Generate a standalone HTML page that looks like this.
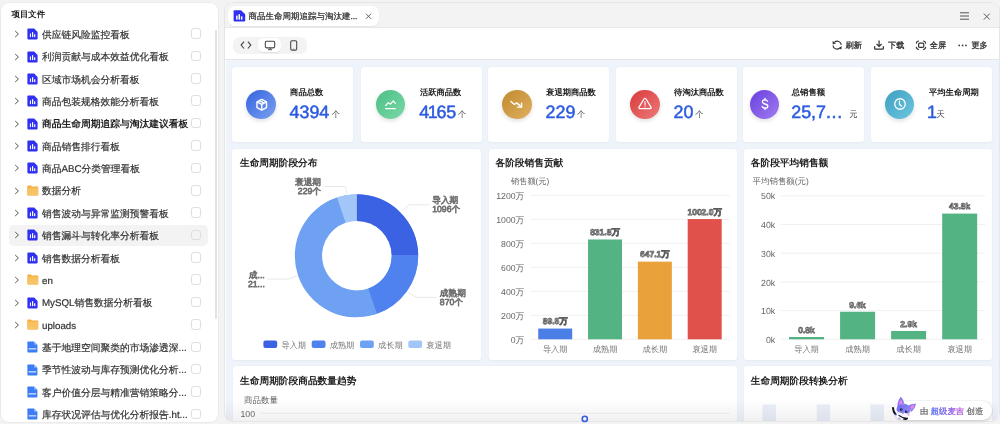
<!DOCTYPE html><html><head><meta charset="utf-8"><style>
*{box-sizing:border-box;margin:0;padding:0}
html,body{text-rendering:geometricPrecision;width:1000px;height:424px;overflow:hidden;background:#f3f3f3;font-family:"Liberation Sans",sans-serif;color:#333}
.abs{position:absolute}
#side{position:absolute;left:1px;top:2.5px;width:217.1px;height:419px;background:#fff;border-radius:8px;box-shadow:0 0 0 0.6px #e4e4e4}
#side .hd{position:absolute;left:10.5px;top:5px;font-size:8.4px;font-weight:bold;color:#222;line-height:12px}
.row{position:absolute;left:0;width:214px;height:22px}
.row .hov{position:absolute;left:8.5px;top:1px;width:199px;height:20.5px;background:#f3f3f3;border-radius:5px}
.row .chev{position:absolute;left:14px;top:7px}
.row .ic{position:absolute;left:26.6px;top:5px}
.row .t{position:absolute;left:42px;top:1.7px;line-height:22px;font-size:9.75px;color:#333;-webkit-text-stroke:0.2px #333;white-space:nowrap}
.row.b .t{font-weight:bold;color:#222;-webkit-text-stroke:0}
.row .cb{position:absolute;left:190.7px;top:5.2px;width:10.6px;height:10.6px;border:0.8px solid #dedede;border-radius:2.8px;background:transparent}
#sb{position:absolute;left:214.7px;top:30px;width:2.6px;height:289px;background:#e2e2e2;border-radius:2px}
#main{position:absolute;left:224.6px;top:2.5px;width:774.2px;height:418.3px;background:#fff;border-radius:8px;box-shadow:0 0 0 0.8px #e2e2e2;overflow:hidden}
#tabbar{position:absolute;left:0;top:0;width:100%;height:25.5px;background:#f3f3f3;border-bottom:0.8px solid #e8e8e8}
#tab{position:absolute;left:3.8px;top:3.6px;width:151px;height:20.3px;background:#fff;border-radius:7px;box-shadow:0 0.5px 1px rgba(0,0,0,0.06)}
#tab .t{position:absolute;left:20px;top:0;line-height:20px;font-size:8.5px;color:#333;-webkit-text-stroke:0.25px #333;white-space:nowrap}
#tbar{position:absolute;left:0;top:25.5px;width:100%;height:31.6px;background:#fff;border-bottom:0.8px solid #e6e6e6}
#seg{position:absolute;left:8.4px;top:9.3px;width:73.8px;height:17.1px;background:#f3f3f3;border-radius:7px}
#seg .on{position:absolute;left:24.6px;top:1.2px;width:23.7px;height:14px;background:#fff;border-radius:5px;box-shadow:0 0.5px 1px rgba(0,0,0,0.08)}
.tb{position:absolute;top:9.5px;height:17px;line-height:17px;font-size:8.2px;color:#333;-webkit-text-stroke:0.3px #333;white-space:nowrap}
#dash{position:absolute;left:1px;top:57.1px;width:773.2px;height:400px;background:#eff3fa}
.card{position:absolute;background:#fff;border-radius:3px;box-shadow:0 0.5px 2px rgba(30,50,120,0.05)}
.kt{position:absolute;font-size:8.3px;font-weight:bold;color:#222;white-space:nowrap;line-height:10px}
.kv{position:absolute;font-size:17.9px;font-weight:normal;-webkit-text-stroke:0.5px #2b5be0;color:#2b5be0;white-space:nowrap;line-height:20px}
.ku{position:absolute;font-size:8.3px;color:#444;white-space:nowrap;line-height:10px}
.circ{position:absolute;width:29.5px;height:29.5px;border-radius:50%;box-shadow:0 2px 4px rgba(0,0,0,0.12)}
.ct{position:absolute;font-size:9.7px;font-weight:bold;color:#222;white-space:nowrap;line-height:12px}
svg text{font-family:"Liberation Sans",sans-serif}
</style></head><body style="will-change:transform">
<div id="side"><div class="hd">项目文件</div></div>
<div class="abs" style="left:0;top:0;width:219px;height:424px"><div class="row" style="top:23.15px"><svg class="chev" width="6" height="8" viewBox="0 0 6 8"><path d="M1.2 1 L4.4 4 L1.2 7" fill="none" stroke="#555" stroke-width="1"/></svg><svg class="ic" width="11" height="12" viewBox="0 0 11 12"><path d="M1.2 0.6 H7.2 L10.6 4 V10.6 Q10.6 11.4 9.8 11.4 H1.2 Q0.4 11.4 0.4 10.6 V1.4 Q0.4 0.6 1.2 0.6Z" fill="#3030f2"/><rect x="2.9" y="5.5" width="1.1" height="3.6" fill="#fff"/><rect x="5" y="4.2" width="1.2" height="4.9" fill="#fff"/><rect x="7.1" y="6.3" width="1.2" height="2.8" fill="#fff"/></svg><span class="t">供应链风险监控看板</span><i class="cb"></i></div>
<div class="row" style="top:45.52px"><svg class="chev" width="6" height="8" viewBox="0 0 6 8"><path d="M1.2 1 L4.4 4 L1.2 7" fill="none" stroke="#555" stroke-width="1"/></svg><svg class="ic" width="11" height="12" viewBox="0 0 11 12"><path d="M1.2 0.6 H7.2 L10.6 4 V10.6 Q10.6 11.4 9.8 11.4 H1.2 Q0.4 11.4 0.4 10.6 V1.4 Q0.4 0.6 1.2 0.6Z" fill="#3030f2"/><rect x="2.9" y="5.5" width="1.1" height="3.6" fill="#fff"/><rect x="5" y="4.2" width="1.2" height="4.9" fill="#fff"/><rect x="7.1" y="6.3" width="1.2" height="2.8" fill="#fff"/></svg><span class="t">利润贡献与成本效益优化看板</span><i class="cb"></i></div>
<div class="row" style="top:67.89px"><svg class="chev" width="6" height="8" viewBox="0 0 6 8"><path d="M1.2 1 L4.4 4 L1.2 7" fill="none" stroke="#555" stroke-width="1"/></svg><svg class="ic" width="11" height="12" viewBox="0 0 11 12"><path d="M1.2 0.6 H7.2 L10.6 4 V10.6 Q10.6 11.4 9.8 11.4 H1.2 Q0.4 11.4 0.4 10.6 V1.4 Q0.4 0.6 1.2 0.6Z" fill="#3030f2"/><rect x="2.9" y="5.5" width="1.1" height="3.6" fill="#fff"/><rect x="5" y="4.2" width="1.2" height="4.9" fill="#fff"/><rect x="7.1" y="6.3" width="1.2" height="2.8" fill="#fff"/></svg><span class="t">区域市场机会分析看板</span><i class="cb"></i></div>
<div class="row" style="top:90.26px"><svg class="chev" width="6" height="8" viewBox="0 0 6 8"><path d="M1.2 1 L4.4 4 L1.2 7" fill="none" stroke="#555" stroke-width="1"/></svg><svg class="ic" width="11" height="12" viewBox="0 0 11 12"><path d="M1.2 0.6 H7.2 L10.6 4 V10.6 Q10.6 11.4 9.8 11.4 H1.2 Q0.4 11.4 0.4 10.6 V1.4 Q0.4 0.6 1.2 0.6Z" fill="#3030f2"/><rect x="2.9" y="5.5" width="1.1" height="3.6" fill="#fff"/><rect x="5" y="4.2" width="1.2" height="4.9" fill="#fff"/><rect x="7.1" y="6.3" width="1.2" height="2.8" fill="#fff"/></svg><span class="t">商品包装规格效能分析看板</span><i class="cb"></i></div>
<div class="row b" style="top:112.63px"><svg class="chev" width="6" height="8" viewBox="0 0 6 8"><path d="M1.2 1 L4.4 4 L1.2 7" fill="none" stroke="#555" stroke-width="1"/></svg><svg class="ic" width="11" height="12" viewBox="0 0 11 12"><path d="M1.2 0.6 H7.2 L10.6 4 V10.6 Q10.6 11.4 9.8 11.4 H1.2 Q0.4 11.4 0.4 10.6 V1.4 Q0.4 0.6 1.2 0.6Z" fill="#3030f2"/><rect x="2.9" y="5.5" width="1.1" height="3.6" fill="#fff"/><rect x="5" y="4.2" width="1.2" height="4.9" fill="#fff"/><rect x="7.1" y="6.3" width="1.2" height="2.8" fill="#fff"/></svg><span class="t">商品生命周期追踪与淘汰建议看板</span><i class="cb"></i></div>
<div class="row" style="top:135.00px"><svg class="chev" width="6" height="8" viewBox="0 0 6 8"><path d="M1.2 1 L4.4 4 L1.2 7" fill="none" stroke="#555" stroke-width="1"/></svg><svg class="ic" width="11" height="12" viewBox="0 0 11 12"><path d="M1.2 0.6 H7.2 L10.6 4 V10.6 Q10.6 11.4 9.8 11.4 H1.2 Q0.4 11.4 0.4 10.6 V1.4 Q0.4 0.6 1.2 0.6Z" fill="#3030f2"/><rect x="2.9" y="5.5" width="1.1" height="3.6" fill="#fff"/><rect x="5" y="4.2" width="1.2" height="4.9" fill="#fff"/><rect x="7.1" y="6.3" width="1.2" height="2.8" fill="#fff"/></svg><span class="t">商品销售排行看板</span><i class="cb"></i></div>
<div class="row" style="top:157.37px"><svg class="chev" width="6" height="8" viewBox="0 0 6 8"><path d="M1.2 1 L4.4 4 L1.2 7" fill="none" stroke="#555" stroke-width="1"/></svg><svg class="ic" width="11" height="12" viewBox="0 0 11 12"><path d="M1.2 0.6 H7.2 L10.6 4 V10.6 Q10.6 11.4 9.8 11.4 H1.2 Q0.4 11.4 0.4 10.6 V1.4 Q0.4 0.6 1.2 0.6Z" fill="#3030f2"/><rect x="2.9" y="5.5" width="1.1" height="3.6" fill="#fff"/><rect x="5" y="4.2" width="1.2" height="4.9" fill="#fff"/><rect x="7.1" y="6.3" width="1.2" height="2.8" fill="#fff"/></svg><span class="t">商品ABC分类管理看板</span><i class="cb"></i></div>
<div class="row" style="top:179.74px"><svg class="chev" width="6" height="8" viewBox="0 0 6 8"><path d="M1.2 1 L4.4 4 L1.2 7" fill="none" stroke="#555" stroke-width="1"/></svg><svg class="ic" width="12" height="12" viewBox="0 0 12 12"><defs><linearGradient id="fd" x1="0" y1="0" x2="0" y2="1"><stop offset="0" stop-color="#f6bf5c"/><stop offset="1" stop-color="#f8c66c"/></linearGradient></defs><path d="M0.4 1.2 Q0.4 0.4 1.2 0.4 H3.4 Q3.9 0.4 4.2 0.8 L4.9 1.6 H10.4 Q11.2 1.6 11.2 2.4 V9.8 Q11.2 10.6 10.4 10.6 H1.2 Q0.4 10.6 0.4 9.8Z" fill="#f3ab3a"/><path d="M0.4 2.6 H11.2 V9.8 Q11.2 10.6 10.4 10.6 H1.2 Q0.4 10.6 0.4 9.8Z" fill="url(#fd)"/></svg><span class="t">数据分析</span><i class="cb"></i></div>
<div class="row" style="top:202.11px"><svg class="chev" width="6" height="8" viewBox="0 0 6 8"><path d="M1.2 1 L4.4 4 L1.2 7" fill="none" stroke="#555" stroke-width="1"/></svg><svg class="ic" width="11" height="12" viewBox="0 0 11 12"><path d="M1.2 0.6 H7.2 L10.6 4 V10.6 Q10.6 11.4 9.8 11.4 H1.2 Q0.4 11.4 0.4 10.6 V1.4 Q0.4 0.6 1.2 0.6Z" fill="#3030f2"/><rect x="2.9" y="5.5" width="1.1" height="3.6" fill="#fff"/><rect x="5" y="4.2" width="1.2" height="4.9" fill="#fff"/><rect x="7.1" y="6.3" width="1.2" height="2.8" fill="#fff"/></svg><span class="t">销售波动与异常监测预警看板</span><i class="cb"></i></div>
<div class="row h" style="top:224.48px"><i class="hov"></i><svg class="chev" width="6" height="8" viewBox="0 0 6 8"><path d="M1.2 1 L4.4 4 L1.2 7" fill="none" stroke="#555" stroke-width="1"/></svg><svg class="ic" width="11" height="12" viewBox="0 0 11 12"><path d="M1.2 0.6 H7.2 L10.6 4 V10.6 Q10.6 11.4 9.8 11.4 H1.2 Q0.4 11.4 0.4 10.6 V1.4 Q0.4 0.6 1.2 0.6Z" fill="#3030f2"/><rect x="2.9" y="5.5" width="1.1" height="3.6" fill="#fff"/><rect x="5" y="4.2" width="1.2" height="4.9" fill="#fff"/><rect x="7.1" y="6.3" width="1.2" height="2.8" fill="#fff"/></svg><span class="t">销售漏斗与转化率分析看板</span><i class="cb"></i></div>
<div class="row" style="top:246.85px"><svg class="chev" width="6" height="8" viewBox="0 0 6 8"><path d="M1.2 1 L4.4 4 L1.2 7" fill="none" stroke="#555" stroke-width="1"/></svg><svg class="ic" width="11" height="12" viewBox="0 0 11 12"><path d="M1.2 0.6 H7.2 L10.6 4 V10.6 Q10.6 11.4 9.8 11.4 H1.2 Q0.4 11.4 0.4 10.6 V1.4 Q0.4 0.6 1.2 0.6Z" fill="#3030f2"/><rect x="2.9" y="5.5" width="1.1" height="3.6" fill="#fff"/><rect x="5" y="4.2" width="1.2" height="4.9" fill="#fff"/><rect x="7.1" y="6.3" width="1.2" height="2.8" fill="#fff"/></svg><span class="t">销售数据分析看板</span><i class="cb"></i></div>
<div class="row" style="top:269.22px"><svg class="chev" width="6" height="8" viewBox="0 0 6 8"><path d="M1.2 1 L4.4 4 L1.2 7" fill="none" stroke="#555" stroke-width="1"/></svg><svg class="ic" width="12" height="12" viewBox="0 0 12 12"><defs><linearGradient id="fd" x1="0" y1="0" x2="0" y2="1"><stop offset="0" stop-color="#f6bf5c"/><stop offset="1" stop-color="#f8c66c"/></linearGradient></defs><path d="M0.4 1.2 Q0.4 0.4 1.2 0.4 H3.4 Q3.9 0.4 4.2 0.8 L4.9 1.6 H10.4 Q11.2 1.6 11.2 2.4 V9.8 Q11.2 10.6 10.4 10.6 H1.2 Q0.4 10.6 0.4 9.8Z" fill="#f3ab3a"/><path d="M0.4 2.6 H11.2 V9.8 Q11.2 10.6 10.4 10.6 H1.2 Q0.4 10.6 0.4 9.8Z" fill="url(#fd)"/></svg><span class="t">en</span><i class="cb"></i></div>
<div class="row" style="top:291.59px"><svg class="chev" width="6" height="8" viewBox="0 0 6 8"><path d="M1.2 1 L4.4 4 L1.2 7" fill="none" stroke="#555" stroke-width="1"/></svg><svg class="ic" width="11" height="12" viewBox="0 0 11 12"><path d="M1.2 0.6 H7.2 L10.6 4 V10.6 Q10.6 11.4 9.8 11.4 H1.2 Q0.4 11.4 0.4 10.6 V1.4 Q0.4 0.6 1.2 0.6Z" fill="#3030f2"/><rect x="2.9" y="5.5" width="1.1" height="3.6" fill="#fff"/><rect x="5" y="4.2" width="1.2" height="4.9" fill="#fff"/><rect x="7.1" y="6.3" width="1.2" height="2.8" fill="#fff"/></svg><span class="t">MySQL销售数据分析看板</span><i class="cb"></i></div>
<div class="row" style="top:313.96px"><svg class="chev" width="6" height="8" viewBox="0 0 6 8"><path d="M1.2 1 L4.4 4 L1.2 7" fill="none" stroke="#555" stroke-width="1"/></svg><svg class="ic" width="12" height="12" viewBox="0 0 12 12"><defs><linearGradient id="fd" x1="0" y1="0" x2="0" y2="1"><stop offset="0" stop-color="#f6bf5c"/><stop offset="1" stop-color="#f8c66c"/></linearGradient></defs><path d="M0.4 1.2 Q0.4 0.4 1.2 0.4 H3.4 Q3.9 0.4 4.2 0.8 L4.9 1.6 H10.4 Q11.2 1.6 11.2 2.4 V9.8 Q11.2 10.6 10.4 10.6 H1.2 Q0.4 10.6 0.4 9.8Z" fill="#f3ab3a"/><path d="M0.4 2.6 H11.2 V9.8 Q11.2 10.6 10.4 10.6 H1.2 Q0.4 10.6 0.4 9.8Z" fill="url(#fd)"/></svg><span class="t">uploads</span><i class="cb"></i></div>
<div class="row" style="top:336.33px"><svg class="ic" width="11" height="12" viewBox="0 0 11 12"><path d="M1.2 0.4 H7 L10.4 3.8 V10.8 Q10.4 11.6 9.6 11.6 H1.2 Q0.4 11.6 0.4 10.8 V1.2 Q0.4 0.4 1.2 0.4Z" fill="#3c7cf4"/><path d="M7 0.4 L10.4 3.8 H7.8 Q7 3.8 7 3Z" fill="#8fb4fa"/><rect x="1.6" y="7.2" width="7.6" height="1.3" fill="#cfe0ff"/></svg><span class="t">基于地理空间聚类的市场渗透深...</span><i class="cb"></i></div>
<div class="row" style="top:358.70px"><svg class="ic" width="11" height="12" viewBox="0 0 11 12"><path d="M1.2 0.4 H7 L10.4 3.8 V10.8 Q10.4 11.6 9.6 11.6 H1.2 Q0.4 11.6 0.4 10.8 V1.2 Q0.4 0.4 1.2 0.4Z" fill="#3c7cf4"/><path d="M7 0.4 L10.4 3.8 H7.8 Q7 3.8 7 3Z" fill="#8fb4fa"/><rect x="1.6" y="7.2" width="7.6" height="1.3" fill="#cfe0ff"/></svg><span class="t">季节性波动与库存预测优化分析...</span><i class="cb"></i></div>
<div class="row" style="top:381.07px"><svg class="ic" width="11" height="12" viewBox="0 0 11 12"><path d="M1.2 0.4 H7 L10.4 3.8 V10.8 Q10.4 11.6 9.6 11.6 H1.2 Q0.4 11.6 0.4 10.8 V1.2 Q0.4 0.4 1.2 0.4Z" fill="#3c7cf4"/><path d="M7 0.4 L10.4 3.8 H7.8 Q7 3.8 7 3Z" fill="#8fb4fa"/><rect x="1.6" y="7.2" width="7.6" height="1.3" fill="#cfe0ff"/></svg><span class="t">客户价值分层与精准营销策略分...</span><i class="cb"></i></div>
<div class="row" style="top:403.44px"><svg class="ic" width="11" height="12" viewBox="0 0 11 12"><path d="M1.2 0.4 H7 L10.4 3.8 V10.8 Q10.4 11.6 9.6 11.6 H1.2 Q0.4 11.6 0.4 10.8 V1.2 Q0.4 0.4 1.2 0.4Z" fill="#3c7cf4"/><path d="M7 0.4 L10.4 3.8 H7.8 Q7 3.8 7 3Z" fill="#8fb4fa"/><rect x="1.6" y="7.2" width="7.6" height="1.3" fill="#cfe0ff"/></svg><span class="t">库存状况评估与优化分析报告.ht...</span><i class="cb"></i></div></div>
<div id="sb"></div>
<div id="main">
 <div id="tabbar"><div id="tab"><span class="t">商品生命周期追踪与淘汰建...</span></div></div>
 <div id="tbar"><div id="seg"><div class="on"></div></div>
 </div>
 <div id="dash"><div class="card" style="left:6.90px;top:7.20px;width:120.8px;height:75px"></div><div class="circ" style="left:20.50px;top:30.10px;background:linear-gradient(135deg,#3563e0,#7ba0f0)"><div style="position:absolute;left:0;top:0;width:29.5px;height:29.5px;display:flex;align-items:center;justify-content:center"><svg width="13.5" height="13.5" viewBox="0 0 24 24" style="margin-left:1.6px" fill="none" stroke="#fff" stroke-width="2.5" stroke-linejoin="round"><path d="M12 2.5 L20.5 7 V17 L12 21.5 L3.5 17 V7 Z"/><path d="M3.5 7 L12 11.5 L20.5 7 M12 11.5 V21.5 M7.8 4.8 L16.2 9.2"/></svg></div></div><div class="kt" style="left:64.50px;top:27.40px">商品总数</div><div class="kv" style="left:63.90px;top:42.20px">4394</div><div class="ku" style="left:106.20px;top:49.40px">个</div><div class="card" style="left:135.15px;top:7.20px;width:120.8px;height:75px"></div><div class="circ" style="left:150.30px;top:30.10px;background:linear-gradient(135deg,#4cbf86,#7ad9a6)"><div style="position:absolute;left:0;top:0;width:29.5px;height:29.5px;display:flex;align-items:center;justify-content:center"><svg width="13" height="13" viewBox="0 0 24 24" fill="none" stroke="#fff" stroke-width="2.2" stroke-linecap="round" stroke-linejoin="round"><path d="M3 14 L8 8.5 L12 11.5 L17 5.5 L21 10"/><path d="M3 19.5 H21"/></svg></div></div><div class="kt" style="left:194.30px;top:27.40px">活跃商品数</div><div class="kv" style="left:193.70px;top:42.20px">4<span style="margin:0 -1.4px">1</span>65</div><div class="ku" style="left:232.40px;top:49.40px">个</div><div class="card" style="left:262.50px;top:7.20px;width:120.8px;height:75px"></div><div class="circ" style="left:276.50px;top:30.10px;background:linear-gradient(135deg,#c08a2e,#e0b060)"><div style="position:absolute;left:0;top:0;width:29.5px;height:29.5px;display:flex;align-items:center;justify-content:center"><svg width="13" height="13" viewBox="0 0 24 24" fill="none" stroke="#fff" stroke-width="2.6" stroke-linecap="round" stroke-linejoin="round"><path d="M1.8 6.4 L8.2 12.1 L12.4 9 L21.3 16.8"/><path d="M21.4 9.5 V16.9 H13.8"/></svg></div></div><div class="kt" style="left:320.50px;top:27.40px">衰退期商品数</div><div class="kv" style="left:319.90px;top:42.20px">229</div><div class="ku" style="left:351.40px;top:49.40px">个</div><div class="card" style="left:390.30px;top:7.20px;width:120.8px;height:75px"></div><div class="circ" style="left:404.50px;top:30.10px;background:linear-gradient(135deg,#d83a3a,#ee7a7a)"><div style="position:absolute;left:0;top:0;width:29.5px;height:29.5px;display:flex;align-items:center;justify-content:center"><svg width="14" height="14" viewBox="0 0 24 24" fill="none" stroke="#fff" stroke-width="2.1" stroke-linejoin="round"><path d="M10.2 3.4 Q12 0.9 13.8 3.4 L22.2 17.4 Q23.4 19.8 20.6 19.8 H3.4 Q0.6 19.8 1.8 17.4Z"/><path d="M12 7.8 V13.6 M12 16.4 V16.9" stroke-linecap="round" stroke-width="1.9"/></svg></div></div><div class="kt" style="left:448.50px;top:27.40px">待淘汰商品数</div><div class="kv" style="left:447.90px;top:42.20px">20</div><div class="ku" style="left:469.60px;top:49.40px">个</div><div class="card" style="left:517.90px;top:7.20px;width:120.8px;height:75px"></div><div class="circ" style="left:524.40px;top:30.10px;background:linear-gradient(135deg,#6a3fe0,#a07cf0)"><div style="position:absolute;left:0;top:0;width:29.5px;height:29.5px;display:flex;align-items:center;justify-content:center"><svg width="14" height="14" viewBox="0 0 24 24" fill="none" stroke="#fff" stroke-width="2.3" stroke-linecap="round"><path d="M16.5 7.5 Q15.5 5 12 5 Q7.5 5 7.5 8.3 Q7.5 11 12 12 Q16.8 13 16.8 15.8 Q16.8 19 12 19 Q8.2 19 7.2 16.3"/><path d="M12 2.5 V5 M12 19 V21.5"/></svg></div></div><div class="kt" style="left:566.20px;top:27.40px">总销售额</div><div class="kv" style="left:565.60px;top:42.20px">25,7<span style="letter-spacing:0.6px">...</span></div><div class="ku" style="left:623.70px;top:49.40px">元</div><div class="card" style="left:645.90px;top:7.20px;width:120.8px;height:75px"></div><div class="circ" style="left:659.40px;top:30.10px;background:linear-gradient(135deg,#3f9fc0,#6cc6e0)"><div style="position:absolute;left:0;top:0;width:29.5px;height:29.5px;display:flex;align-items:center;justify-content:center"><svg width="14" height="14" viewBox="0 0 24 24" fill="none" stroke="#fff" stroke-width="2.2" stroke-linecap="round"><circle cx="12" cy="12" r="9"/><path d="M11 7 V12.5 L14.5 15.5"/></svg></div></div><div class="kt" style="left:703.40px;top:27.40px">平均生命周期</div><div class="kv" style="left:701.50px;top:42.20px">1</div><div class="ku" style="left:711.00px;top:49.40px">天</div><div class="card" style="left:6.90px;top:89.70px;width:248.7px;height:210.8px"></div><div class="card" style="left:263.30px;top:89.70px;width:248.2px;height:210.8px"></div><div class="card" style="left:518.10px;top:89.70px;width:248.3px;height:210.8px"></div><div class="card" style="left:7.00px;top:306.40px;width:504.5px;height:80px"></div><div class="card" style="left:518.10px;top:306.40px;width:248.3px;height:80px"></div><div class="ct" style="left:14.40px;top:98.10px">生命周期阶段分布</div><div class="ct" style="left:269.90px;top:98.10px">各阶段销售贡献</div><div class="ct" style="left:525.20px;top:98.10px">各阶段平均销售额</div><div class="ct" style="left:14.50px;top:316.70px">生命周期阶段商品数量趋势</div><div class="ct" style="left:525.20px;top:316.70px">生命周期阶段转换分析</div></div>
</div>
<div class="tb abs" style="left:845.5px;top:36.8px">刷新</div>
<div class="tb abs" style="left:888px;top:36.8px">下载</div>
<div class="tb abs" style="left:929.8px;top:36.8px">全屏</div>
<div class="tb abs" style="left:971.4px;top:36.8px">更多</div>
<svg class="abs" style="left:0;top:0" width="1000" height="60" viewBox="0 0 1000 60">
<path d="M234.6 10.2 H241 L245.2 14.2 V20.6 Q245.2 21.6 244.2 21.6 H234.6 Q233.6 21.6 233.6 20.6 V11.2 Q233.6 10.2 234.6 10.2Z" fill="#3030f2"/>
<rect x="236.1" y="15.6" width="1.5" height="4" fill="#fff"/><rect x="238.5" y="14.2" width="1.5" height="5.4" fill="#fff"/><rect x="240.9" y="16.4" width="1.5" height="3.2" fill="#fff"/>
<path d="M366 13.8 L371 18.8 M371 13.8 L366 18.8" stroke="#555" stroke-width="0.9"/>
<path d="M960 12.8 H969 M960 16 H969 M960 19.2 H969" stroke="#555" stroke-width="1"/>
<path d="M983.8 13.6 L989.8 19.6 M989.8 13.6 L983.8 19.6" stroke="#555" stroke-width="0.95"/>
<path d="M244 41.6 L241.1 45.1 L244 48.5 M247.9 41.6 L250.8 45.1 L247.9 48.5" fill="none" stroke="#444" stroke-width="1.1"/>
<rect x="265.3" y="41.3" width="9.4" height="6.6" rx="1.3" fill="none" stroke="#444" stroke-width="1.05"/><path d="M270 47.9 V49.5 M268 49.7 H272" stroke="#444" stroke-width="0.9"/>
<rect x="290.7" y="40.7" width="6" height="9.4" rx="1.4" fill="none" stroke="#444" stroke-width="1.05"/><path d="M293.2 48.6 H294.2" stroke="#999" stroke-width="0.7"/>
<path d="M841.3 44.8 A4.2 4.2 0 0 0 834.6 42" fill="none" stroke="#333" stroke-width="1.15"/><path d="M832.6 41 L836 43.3 L832.8 44.6Z" fill="#333"/>
<path d="M832.9 45.5 A4.2 4.2 0 0 0 839.6 48.3" fill="none" stroke="#333" stroke-width="1.15"/><path d="M841.6 46 L841.5 49.6 L838.4 48.2Z" fill="#333"/>
<path d="M879.1 40.6 V45.6 M876.6 44 L879.1 46.4 L881.6 44" fill="none" stroke="#333" stroke-width="1.2"/><path d="M874.6 46.3 V48.2 Q874.6 49.2 875.6 49.2 H882.4 Q883.4 49.2 883.4 48.2 V46.3" fill="none" stroke="#333" stroke-width="1.3"/>
<path d="M916.4 43.1 Q916.6 41.2 918.5 41 M923.5 41 Q925.4 41.2 925.6 43.1 M925.6 47.4 Q925.4 49.3 923.5 49.5 M918.5 49.5 Q916.6 49.3 916.4 47.4" fill="none" stroke="#333" stroke-width="1.2" stroke-linecap="round"/><rect x="918.6" y="43.2" width="5.2" height="4.2" rx="1.2" fill="none" stroke="#333" stroke-width="1.2"/>
<circle cx="959.2" cy="45.4" r="0.85" fill="#333"/><circle cx="962.6" cy="45.4" r="0.85" fill="#333"/><circle cx="966" cy="45.4" r="0.85" fill="#333"/>
</svg>
<svg class="abs" style="left:0;top:0" width="1000" height="424" viewBox="0 0 1000 424"><circle cx="356.8" cy="255.7" r="48.15" fill="none" stroke="#6fa1f3" stroke-width="26.1"/><path d="M356.80 194.20 A61.5 61.5 0 0 1 418.30 255.47 L391.60 255.57 A34.8 34.8 0 0 0 356.80 220.90Z" fill="#3a62e3"/><path d="M418.30 255.47 A61.5 61.5 0 0 1 376.76 313.87 L368.09 288.62 A34.8 34.8 0 0 0 391.60 255.57Z" fill="#4f82ef"/><path d="M376.76 313.87 A61.5 61.5 0 1 1 337.03 197.47 L345.61 222.75 A34.8 34.8 0 1 0 368.09 288.62Z" fill="#6fa1f3"/><path d="M337.03 197.47 A61.5 61.5 0 0 1 356.80 194.20 L356.80 220.90 A34.8 34.8 0 0 0 345.61 222.75Z" fill="#a3c6f8"/><path d="M401.5 211.2 L409.3 204.8 L429 204.8" fill="none" stroke="#e2e2e2" stroke-width="0.8"/><path d="M407.7 292.2 L416 297.4 L436.5 297.4" fill="none" stroke="#e2e2e2" stroke-width="0.8"/><path d="M347 193.6 L345.1 186.5 L324.3 186.5" fill="none" stroke="#e2e2e2" stroke-width="0.8"/><path d="M297.3 275.8 L288.8 279 L267.5 279" fill="none" stroke="#e2e2e2" stroke-width="0.8"/><text x="432.2" y="203.4" font-size="8.7" text-anchor="start" fill="#fff" stroke="#fff" stroke-width="2.2" stroke-linejoin="round" font-weight="normal">导入期</text><text x="432.2" y="203.4" font-size="8.7" text-anchor="start" fill="#e8e8e8" stroke="#707070" stroke-width="0.75" stroke-linejoin="round" font-weight="normal">导入期</text><text x="432.2" y="212" font-size="8.7" text-anchor="start" fill="#fff" stroke="#fff" stroke-width="2.2" stroke-linejoin="round" font-weight="normal">1096个</text><text x="432.2" y="212" font-size="8.7" text-anchor="start" fill="#e8e8e8" stroke="#707070" stroke-width="0.75" stroke-linejoin="round" font-weight="normal">1096个</text><text x="439.8" y="296.3" font-size="8.7" text-anchor="start" fill="#fff" stroke="#fff" stroke-width="2.2" stroke-linejoin="round" font-weight="normal">成熟期</text><text x="439.8" y="296.3" font-size="8.7" text-anchor="start" fill="#e8e8e8" stroke="#707070" stroke-width="0.75" stroke-linejoin="round" font-weight="normal">成熟期</text><text x="439.8" y="305" font-size="8.7" text-anchor="start" fill="#fff" stroke="#fff" stroke-width="2.2" stroke-linejoin="round" font-weight="normal">870个</text><text x="439.8" y="305" font-size="8.7" text-anchor="start" fill="#e8e8e8" stroke="#707070" stroke-width="0.75" stroke-linejoin="round" font-weight="normal">870个</text><text x="321" y="185.3" font-size="8.7" text-anchor="end" fill="#fff" stroke="#fff" stroke-width="2.2" stroke-linejoin="round" font-weight="normal">衰退期</text><text x="321" y="185.3" font-size="8.7" text-anchor="end" fill="#e8e8e8" stroke="#707070" stroke-width="0.75" stroke-linejoin="round" font-weight="normal">衰退期</text><text x="321" y="194" font-size="8.7" text-anchor="end" fill="#fff" stroke="#fff" stroke-width="2.2" stroke-linejoin="round" font-weight="normal">229个</text><text x="321" y="194" font-size="8.7" text-anchor="end" fill="#e8e8e8" stroke="#707070" stroke-width="0.75" stroke-linejoin="round" font-weight="normal">229个</text><text x="264.8" y="277.8" font-size="8.7" text-anchor="end" fill="#fff" stroke="#fff" stroke-width="2.2" stroke-linejoin="round" font-weight="normal">成...</text><text x="264.8" y="277.8" font-size="8.7" text-anchor="end" fill="#e8e8e8" stroke="#707070" stroke-width="0.75" stroke-linejoin="round" font-weight="normal">成...</text><text x="264.8" y="286.5" font-size="8.7" text-anchor="end" fill="#fff" stroke="#fff" stroke-width="2.2" stroke-linejoin="round" font-weight="normal">21...</text><text x="264.8" y="286.5" font-size="8.7" text-anchor="end" fill="#e8e8e8" stroke="#707070" stroke-width="0.75" stroke-linejoin="round" font-weight="normal">21...</text><rect x="263.40" y="340.5" width="13.8" height="7.4" rx="2" fill="#3a62e3"/><text x="281.40" y="347.6" font-size="8.2" fill="#777">导入期</text><rect x="311.70" y="340.5" width="13.8" height="7.4" rx="2" fill="#4f82ef"/><text x="329.70" y="347.6" font-size="8.2" fill="#777">成熟期</text><rect x="360.00" y="340.5" width="13.8" height="7.4" rx="2" fill="#6fa1f3"/><text x="378.00" y="347.6" font-size="8.2" fill="#777">成长期</text><rect x="408.30" y="340.5" width="13.8" height="7.4" rx="2" fill="#a3c6f8"/><text x="426.30" y="347.6" font-size="8.2" fill="#777">衰退期</text><text x="511" y="184.3" font-size="8.2" fill="#666">销售额(元)</text><line x1="530.3" y1="339.30" x2="729.6" y2="339.30" stroke="#ececec" stroke-width="0.8"/><text x="524.3" y="342.90" font-size="8.7" text-anchor="end" fill="#666">0万</text><line x1="530.3" y1="315.30" x2="729.6" y2="315.30" stroke="#ececec" stroke-width="0.8"/><text x="524.3" y="318.90" font-size="8.7" text-anchor="end" fill="#666">200万</text><line x1="530.3" y1="291.30" x2="729.6" y2="291.30" stroke="#ececec" stroke-width="0.8"/><text x="524.3" y="294.90" font-size="8.7" text-anchor="end" fill="#666">400万</text><line x1="530.3" y1="267.30" x2="729.6" y2="267.30" stroke="#ececec" stroke-width="0.8"/><text x="524.3" y="270.90" font-size="8.7" text-anchor="end" fill="#666">600万</text><line x1="530.3" y1="243.30" x2="729.6" y2="243.30" stroke="#ececec" stroke-width="0.8"/><text x="524.3" y="246.90" font-size="8.7" text-anchor="end" fill="#666">800万</text><line x1="530.3" y1="219.30" x2="729.6" y2="219.30" stroke="#ececec" stroke-width="0.8"/><text x="524.3" y="222.90" font-size="8.7" text-anchor="end" fill="#666">1000万</text><line x1="530.3" y1="195.30" x2="729.6" y2="195.30" stroke="#ececec" stroke-width="0.8"/><text x="524.3" y="198.90" font-size="8.7" text-anchor="end" fill="#666">1200万</text><rect x="538.21" y="328.56" width="34" height="10.74" fill="#4c7ee8"/><text x="555.21" y="324.36" font-size="8.5" text-anchor="middle" fill="#fff" stroke="#fff" stroke-width="2.2" stroke-linejoin="round" font-weight="bold">89.5万</text><text x="555.21" y="324.36" font-size="8.5" text-anchor="middle" fill="#e8e8e8" stroke="#5a5a5a" stroke-width="0.75" stroke-linejoin="round" font-weight="bold">89.5万</text><text x="555.21" y="352.2" font-size="8.2" text-anchor="middle" fill="#777">导入期</text><rect x="588.04" y="239.48" width="34" height="99.82" fill="#54b382"/><text x="605.04" y="235.28" font-size="8.5" text-anchor="middle" fill="#fff" stroke="#fff" stroke-width="2.2" stroke-linejoin="round" font-weight="bold">831.8万</text><text x="605.04" y="235.28" font-size="8.5" text-anchor="middle" fill="#e8e8e8" stroke="#5a5a5a" stroke-width="0.75" stroke-linejoin="round" font-weight="bold">831.8万</text><text x="605.04" y="352.2" font-size="8.2" text-anchor="middle" fill="#777">成熟期</text><rect x="637.86" y="261.65" width="34" height="77.65" fill="#e9a23b"/><text x="654.86" y="257.45" font-size="8.5" text-anchor="middle" fill="#fff" stroke="#fff" stroke-width="2.2" stroke-linejoin="round" font-weight="bold">647.1万</text><text x="654.86" y="257.45" font-size="8.5" text-anchor="middle" fill="#e8e8e8" stroke="#5a5a5a" stroke-width="0.75" stroke-linejoin="round" font-weight="bold">647.1万</text><text x="654.86" y="352.2" font-size="8.2" text-anchor="middle" fill="#777">成长期</text><rect x="687.69" y="219.06" width="34" height="120.24" fill="#e0514c"/><text x="704.69" y="214.86" font-size="8.5" text-anchor="middle" fill="#fff" stroke="#fff" stroke-width="2.2" stroke-linejoin="round" font-weight="bold">1002.0万</text><text x="704.69" y="214.86" font-size="8.5" text-anchor="middle" fill="#e8e8e8" stroke="#5a5a5a" stroke-width="0.75" stroke-linejoin="round" font-weight="bold">1002.0万</text><text x="704.69" y="352.2" font-size="8.2" text-anchor="middle" fill="#777">衰退期</text><text x="752.6" y="184.3" font-size="8.45" fill="#666">平均销售额(元)</text><line x1="781" y1="339.30" x2="985.2" y2="339.30" stroke="#ececec" stroke-width="0.8"/><text x="775.2" y="342.90" font-size="8.8" text-anchor="end" fill="#666">0k</text><line x1="781" y1="310.60" x2="985.2" y2="310.60" stroke="#ececec" stroke-width="0.8"/><text x="775.2" y="314.20" font-size="8.8" text-anchor="end" fill="#666">10k</text><line x1="781" y1="281.90" x2="985.2" y2="281.90" stroke="#ececec" stroke-width="0.8"/><text x="775.2" y="285.50" font-size="8.8" text-anchor="end" fill="#666">20k</text><line x1="781" y1="253.20" x2="985.2" y2="253.20" stroke="#ececec" stroke-width="0.8"/><text x="775.2" y="256.80" font-size="8.8" text-anchor="end" fill="#666">30k</text><line x1="781" y1="224.50" x2="985.2" y2="224.50" stroke="#ececec" stroke-width="0.8"/><text x="775.2" y="228.10" font-size="8.8" text-anchor="end" fill="#666">40k</text><line x1="781" y1="195.80" x2="985.2" y2="195.80" stroke="#ececec" stroke-width="0.8"/><text x="775.2" y="199.40" font-size="8.8" text-anchor="end" fill="#666">50k</text><rect x="789.02" y="337.00" width="35" height="2.30" fill="#54b382"/><text x="806.52" y="332.80" font-size="8.5" text-anchor="middle" fill="#fff" stroke="#fff" stroke-width="2.2" stroke-linejoin="round" font-weight="bold">0.8k</text><text x="806.52" y="332.80" font-size="8.5" text-anchor="middle" fill="#e8e8e8" stroke="#5a5a5a" stroke-width="0.75" stroke-linejoin="round" font-weight="bold">0.8k</text><text x="806.52" y="352.2" font-size="8.2" text-anchor="middle" fill="#777">导入期</text><rect x="840.08" y="311.75" width="35" height="27.55" fill="#54b382"/><text x="857.58" y="307.55" font-size="8.5" text-anchor="middle" fill="#fff" stroke="#fff" stroke-width="2.2" stroke-linejoin="round" font-weight="bold">9.6k</text><text x="857.58" y="307.55" font-size="8.5" text-anchor="middle" fill="#e8e8e8" stroke="#5a5a5a" stroke-width="0.75" stroke-linejoin="round" font-weight="bold">9.6k</text><text x="857.58" y="352.2" font-size="8.2" text-anchor="middle" fill="#777">成熟期</text><rect x="891.12" y="330.98" width="35" height="8.32" fill="#54b382"/><text x="908.62" y="326.78" font-size="8.5" text-anchor="middle" fill="#fff" stroke="#fff" stroke-width="2.2" stroke-linejoin="round" font-weight="bold">2.9k</text><text x="908.62" y="326.78" font-size="8.5" text-anchor="middle" fill="#e8e8e8" stroke="#5a5a5a" stroke-width="0.75" stroke-linejoin="round" font-weight="bold">2.9k</text><text x="908.62" y="352.2" font-size="8.2" text-anchor="middle" fill="#777">成长期</text><rect x="942.18" y="213.59" width="35" height="125.71" fill="#54b382"/><text x="959.68" y="209.39" font-size="8.5" text-anchor="middle" fill="#fff" stroke="#fff" stroke-width="2.2" stroke-linejoin="round" font-weight="bold">43.8k</text><text x="959.68" y="209.39" font-size="8.5" text-anchor="middle" fill="#e8e8e8" stroke="#5a5a5a" stroke-width="0.75" stroke-linejoin="round" font-weight="bold">43.8k</text><text x="959.68" y="352.2" font-size="8.2" text-anchor="middle" fill="#777">衰退期</text><text x="243.9" y="402.5" font-size="8.5" fill="#666">商品数量</text><text x="255" y="416.6" font-size="8.7" text-anchor="end" fill="#666">100</text><line x1="260.5" y1="413.3" x2="729.6" y2="413.3" stroke="#ececec" stroke-width="0.8"/><circle cx="584.8" cy="418.9" r="2.6" fill="#fff" stroke="#3a62e3" stroke-width="1.6"/><rect x="762.4" y="404.5" width="13.5" height="16.8" fill="#e9eef8"/><rect x="816.7" y="404.5" width="13.5" height="16.8" fill="#e9eef8"/><rect x="870.4" y="404.5" width="13.5" height="16.8" fill="#e9eef8"/></svg>
<div class="abs" style="left:225.4px;top:399px;width:773px;height:21.8px;background:linear-gradient(rgba(0,0,0,0),rgba(0,0,0,0.055));border-radius:0 0 7px 7px"></div>
<div class="abs" style="left:893.6px;top:401px;width:98.8px;height:19px;background:#fff;border-radius:10px;box-shadow:0 0 0 0.6px rgba(0,0,0,0.06),0 1px 3px rgba(0,0,0,0.12)"></div>
<svg class="abs" style="left:886px;top:392px" width="36" height="32" viewBox="0 0 36 32">
<defs><linearGradient id="fg" x1="0" y1="0" x2="1" y2="1"><stop offset="0" stop-color="#6c66f0"/><stop offset="1" stop-color="#9b8ef6"/></linearGradient></defs>
<path d="M11.2 15.8 Q11.6 8 14.9 4.8 Q17.6 7.5 18.6 12.6Z" fill="url(#fg)"/>
<path d="M12.9 13.8 Q13.2 9 14.8 7 Q16.2 9 16.6 12.6Z" fill="#e586e6"/>
<path d="M22.6 13.4 Q26.2 11.2 30 11.8 Q29 17 25.2 20Z" fill="url(#fg)"/>
<path d="M24.2 14.2 Q26.8 12.6 28.6 12.8 Q27.8 16 25.4 18Z" fill="#e586e6"/>
<ellipse cx="17.6" cy="17.6" rx="7.1" ry="5.8" fill="url(#fg)"/>
<path d="M16.4 11.8 Q17.5 12.8 18.5 12" stroke="#b8b4fa" stroke-width="0.8" fill="none"/>
<path d="M10.8 19 Q12 24 17.5 24.3 Q22 24.3 24 21.2 Q20.5 22 18.2 20.6 Q14.6 21.6 10.8 19Z" fill="#f2f2ff"/>
<circle cx="15.2" cy="17.6" r="1.3" fill="#1b2340"/><circle cx="20.2" cy="19.8" r="1.3" fill="#1b2340"/>
<circle cx="15.5" cy="17.2" r="0.4" fill="#7fd0e0"/><circle cx="20.5" cy="19.4" r="0.4" fill="#7fd0e0"/>
<circle cx="16.9" cy="21.2" r="0.65" fill="#555"/>
<circle cx="22.6" cy="22.8" r="1.1" fill="#f0a8e8"/>
<path d="M7 16 Q7.2 19.5 9.4 22" stroke="#15151f" stroke-width="2" fill="none" stroke-linecap="round"/>
<circle cx="10" cy="22.6" r="0.9" fill="#4d5ef0"/>
<path d="M12.5 23.2 Q17 26.6 22 26.4" stroke="#1e1e2a" stroke-width="1.2" fill="none"/>
<ellipse cx="19.3" cy="27" rx="2.4" ry="1.1" fill="#15151f"/>
<circle cx="13.2" cy="26.6" r="1.2" fill="#a9b3fa"/>
</svg>
<div class="abs" style="left:920px;top:405px;font-size:8.4px;line-height:12px;color:#666;-webkit-text-stroke:0.2px #666;white-space:nowrap">由 <span style="background:linear-gradient(90deg,#3d5ef0,#c050d8);-webkit-background-clip:text;color:transparent;-webkit-text-stroke:0.25px transparent">超级麦吉</span> 创造</div>

</body></html>
